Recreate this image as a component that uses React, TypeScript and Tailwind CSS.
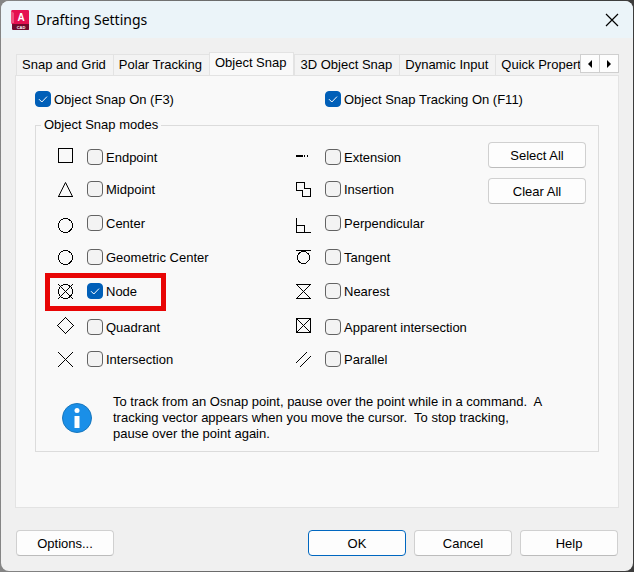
import { ReactNode, ButtonHTMLAttributes, useState } from 'react';

interface CheckProps {
  label: string;
  defaultChecked?: boolean;
}

function Check({ label, defaultChecked = false }: CheckProps) {
  return (
    <label className="flex h-4 items-center gap-[3px] whitespace-nowrap">
      <span className="grid">
        <input
          type="checkbox"
          defaultChecked={defaultChecked}
          className="peer col-start-1 row-start-1 size-4 appearance-none rounded-[4px] border border-[#636363] bg-[#f3f3f3] checked:border-[#005fb8] checked:bg-[#005fb8]"
        />
        <svg
          viewBox="0 0 16 16"
          className="pointer-events-none invisible col-start-1 row-start-1 size-4 peer-checked:visible"
          fill="none"
          stroke="white"
          aria-hidden="true"
        >
          <path d="M4 8.2 6.8 11 12 5.6" />
        </svg>
      </span>
      <span className="pt-[2px]">{label}</span>
    </label>
  );
}

interface DialogButtonProps extends ButtonHTMLAttributes<HTMLButtonElement> {
  primary?: boolean;
  children: ReactNode;
}

function DialogButton({ primary = false, children, ...props }: DialogButtonProps) {
  return (
    <button
      type="button"
      className={`h-[26px] w-[98px] rounded-[4px] border bg-[#fdfdfd] pt-[2px] ${
        primary ? 'border-[#0067c0]' : 'border-[#d0d0d0] border-b-[#bcbcbc]'
      }`}
      {...props}
    >
      {children}
    </button>
  );
}

interface SnapMode {
  name: string;
  glyph: ReactNode;
  checked?: boolean;
  highlighted?: boolean;
}

const modes: SnapMode[] = [
  { name: 'Endpoint', glyph: <path d="M2.5 1.5h14v14h-14z" /> },
  {
    name: 'Midpoint',
    glyph: (
      <>
        <path d="M9.5 3.5 2.5 17.5M9.5 3.5l7 14" shapeRendering="auto" />
        <path d="M2 17.5h15" />
      </>
    ),
  },
  { name: 'Center', glyph: <circle cx="9.5" cy="12.5" r="7" /> },
  { name: 'Geometric Center', glyph: <circle cx="9.5" cy="10.5" r="7" /> },
  {
    name: 'Node',
    glyph: (
      <>
        <circle cx="9.5" cy="10.5" r="7" />
        <path d="m2 3 15 15M17 3 2 18" />
      </>
    ),
    checked: true,
    highlighted: true,
  },
  { name: 'Quadrant', glyph: <path d="m9.5.5 8 8-8 8-8-8z" /> },
  { name: 'Intersection', glyph: <path d="m2 3 15 15M17 3 2 18" /> },
  {
    name: 'Extension',
    glyph: <path d="M2 8h7v2H2zM10 8h1v2h-1zM13 8h1v2h-1z" fill="black" stroke="none" />,
  },
  { name: 'Insertion', glyph: <path d="M2.5 3.5h8v6h6v8h-8v-6h-6z" /> },
  { name: 'Perpendicular', glyph: <path d="M2.5 5v14.5H17M2.5 12.5h8v7" /> },
  {
    name: 'Tangent',
    glyph: (
      <>
        <path d="M2 3.5h15" />
        <circle cx="9.5" cy="10.5" r="6" />
      </>
    ),
  },
  {
    name: 'Nearest',
    glyph: (
      <>
        <path d="M2 3.5h15M2 17.5h15" />
        <path d="m2.5 3.5 14 14M16.5 3.5l-14 14" shapeRendering="auto" />
      </>
    ),
  },
  {
    name: 'Apparent intersection',
    glyph: (
      <>
        <path d="M2.5 1.5h14v14h-14z" />
        <path d="m2.5 1.5 14 14M16.5 1.5l-14 14" shapeRendering="auto" />
      </>
    ),
  },
  { name: 'Parallel', glyph: <path d="m2 14 11-11M6 18 17 7" /> },
];

function ModeRow({ mode }: { mode: SnapMode }) {
  return (
    <div className="relative flex h-4 items-center gap-[11px]">
      <svg
        viewBox="0 0 20 20"
        className="size-5 shrink-0"
        fill="none"
        stroke="black"
        shapeRendering="crispEdges"
        aria-hidden="true"
      >
        {mode.glyph}
      </svg>
      <Check label={mode.name} defaultChecked={mode.checked} />
      {mode.highlighted && (
        <span className="pointer-events-none absolute -top-[10px] -left-[11px] h-[38px] w-[121px] border-5 border-[#e80505]" />
      )}
    </div>
  );
}

const tabs = ['Snap and Grid', 'Polar Tracking', 'Object Snap', '3D Object Snap', 'Dynamic Input', 'Quick Properties'];

function TabBar() {
  const [active, setActive] = useState('Object Snap');

  return (
    <div className="flex h-6 items-end">
      <div role="tablist" className="flex h-6 min-w-0 flex-1 items-end overflow-hidden pl-px">
        {tabs.map((tab) => (
          <button
            key={tab}
            type="button"
            role="tab"
            aria-selected={tab === active}
            onClick={() => setActive(tab)}
            className={`shrink-0 border-t border-l border-[#e3e3e3] pr-[7px] pl-[5px] text-left whitespace-nowrap ${
              tab === active ? 'h-6 border-r bg-[#f9f9f9] pb-1' : 'h-[22px] border-b bg-[#f3f3f3]'
            }`}
          >
            {tab}
          </button>
        ))}
      </div>
      <div className="mb-[3px] flex h-[19px]">
        <button type="button" aria-label="Previous tab" className="flex w-5 items-center justify-center border border-[#cfcfcf] bg-[#fdfdfd]">
          <svg viewBox="0 0 8 8" className="size-2" aria-hidden="true">
            <path d="M6 0v8L2 4z" />
          </svg>
        </button>
        <button type="button" aria-label="Next tab" className="-ml-px flex w-5 items-center justify-center border border-[#cfcfcf] bg-[#fdfdfd]">
          <svg viewBox="0 0 8 8" className="size-2" aria-hidden="true">
            <path d="M2 0v8l4-4z" />
          </svg>
        </button>
      </div>
    </div>
  );
}

function AppIcon() {
  return (
    <svg viewBox="0 0 18 20" className="h-5 w-[18px]" aria-hidden="true">
      <path d="M1 0h16a1 1 0 0 1 1 1v18a1 1 0 0 1-1 1H2l-1-1V14L0 13V1z" fill="#e51050" />
      <path d="M0 1 3 3v10H0z" fill="#f0527c" />
      <path d="M1 14h17v5a1 1 0 0 1-1 1H2l-1-1z" fill="#710b2c" />
      <text x="10" y="11" textAnchor="middle" fill="white" fontSize="10" fontWeight="700" fontFamily="Liberation Sans, sans-serif">
        A
      </text>
      <text x="10" y="18.5" textAnchor="middle" fill="white" fontSize="4" fontWeight="700" fontFamily="Liberation Sans, sans-serif">
        CAD
      </text>
    </svg>
  );
}

export default function App() {
  return (
    <div className="flex min-h-screen flex-col bg-linear-to-r from-[#858585] to-[#3c3c3c] p-px font-['Liberation_Sans',Arial,sans-serif] text-[13px] leading-4 text-black">
      <div role="dialog" aria-labelledby="dialog-title" className="flex flex-1 flex-col overflow-hidden rounded-lg bg-[#f0f0f0]">
        <header className="flex h-[37px] items-center gap-[7px] bg-[#ebf4f9] pr-[14px] pl-[10px]">
          <AppIcon />
          <h1 id="dialog-title" className="flex-1 font-['Noto_Sans',sans-serif] text-sm">
            Drafting Settings
          </h1>
          <button type="button" aria-label="Close">
            <svg viewBox="0 0 14 14" className="size-[14px]" fill="none" stroke="black" strokeWidth="1.2" aria-hidden="true">
              <path d="m1 1 12 12M13 1 1 13" />
            </svg>
          </button>
        </header>

        <main className="flex flex-1 flex-col px-[14px] pt-[14px] pb-[15px]">
          <TabBar />
          <section role="tabpanel" className="-mt-px flex-1 border border-[#e3e3e3] bg-[#f9f9f9] px-[19px] pt-[15px]">
            <div className="flex">
              <div className="w-[290px]">
                <Check label="Object Snap On (F3)" defaultChecked />
              </div>
              <Check label="Object Snap Tracking On (F11)" defaultChecked />
            </div>

            <fieldset className="mt-[10px] border border-[#dcdcdc] pb-[9px]">
              <legend className="ml-[5px] px-[3px]">Object Snap modes</legend>
              <div className="flex justify-between pr-3 pl-5">
                <div className="grid grid-flow-col grid-cols-[238px_auto] grid-rows-[32px_34px_34px_34px_36px_32px_16px] pt-4">
                  {modes.map((mode) => (
                    <ModeRow key={mode.name} mode={mode} />
                  ))}
                </div>
                <div className="flex flex-col gap-[10px] pt-[9px]">
                  <DialogButton>Select All</DialogButton>
                  <DialogButton>Clear All</DialogButton>
                </div>
              </div>

              <div className="mt-[27px] flex items-center gap-[21px] pl-[26px]">
                <svg viewBox="0 0 30 30" className="size-[30px] shrink-0" aria-hidden="true">
                  <circle cx="15" cy="15" r="14.5" fill="#1a8fe8" stroke="#1877bd" />
                  <circle cx="15" cy="7.5" r="2.5" fill="white" />
                  <path d="M12.5 13h5v12h-5z" fill="white" />
                </svg>
                <p>
                  To track from an Osnap point, pause over the point while in a command.&nbsp; A
                  <br />
                  tracking vector appears when you move the cursor.&nbsp; To stop tracking,
                  <br />
                  pause over the point again.
                </p>
              </div>
            </fieldset>
          </section>

          <footer className="mt-[22px] flex gap-2 px-px">
            <div className="flex-1">
              <DialogButton>Options...</DialogButton>
            </div>
            <DialogButton primary>OK</DialogButton>
            <DialogButton>Cancel</DialogButton>
            <DialogButton>Help</DialogButton>
          </footer>
        </main>
      </div>
    </div>
  );
}
